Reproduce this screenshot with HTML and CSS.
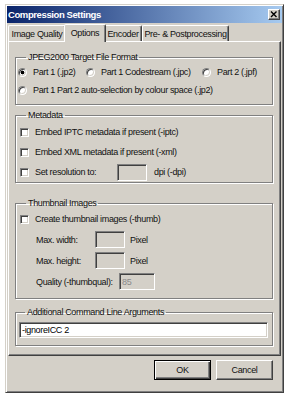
FILE: index.html
```html
<!DOCTYPE html>
<html lang="en">
<head>
  <meta charset="UTF-8" />
  <title>Compression Settings</title>
  <link rel="stylesheet" href="styles.css">
</head>
<body>

  <div class="dialog" role="dialog" aria-label="Compression Settings">
    <div class="titlebar">
      <span class="title">Compression Settings</span>
      <span class="close-btn" aria-label="Close">
        <svg width="10" height="9" viewBox="0 0 10 9">
          <path d="M2 1.5 L7.5 7 M7.5 1.5 L2 7" stroke="#000" stroke-width="1.4" fill="none" />
        </svg>
      </span>
    </div>

    <div class="tabs">
      <div class="tab tab-quality">Image Quality</div>
      <div class="tab tab-options active">Options</div>
      <div class="tab tab-encoder">Encoder</div>
      <div class="tab tab-pre">Pre- &amp; Postprocessing</div>
    </div>

    <div class="panel">
      <!-- Target format -->
      <fieldset class="group group-format">
        <legend>JPEG2000 Target File Format</legend>
        <div class="radio-row">
          <label class="opt opt-jp2"><input type="radio" name="fmt" checked /> Part 1 (.jp2)</label>
          <label class="opt opt-jpc"><input type="radio" name="fmt" /> Part 1 Codestream (.jpc)</label>
          <label class="opt"><input type="radio" name="fmt" /> Part 2 (.jpf)</label>
        </div>
        <div class="radio-row">
          <label class="opt"><input type="radio" name="fmt" /> Part 1 Part 2 auto-selection by colour space (.jp2)</label>
        </div>
      </fieldset>

      <!-- Metadata -->
      <fieldset class="group group-meta">
        <legend>Metadata</legend>
        <div class="check-row">
          <label class="opt"><input type="checkbox" /> Embed IPTC metadata if present (-iptc)</label>
        </div>
        <div class="check-row">
          <label class="opt"><input type="checkbox" /> Embed XML metadata if present (-xml)</label>
        </div>
        <div class="check-row">
          <label class="opt res-label"><input type="checkbox" /> Set resolution to:</label>
          <input type="text" class="field field-small" disabled />
          <span class="unit">dpi (-dpi)</span>
        </div>
      </fieldset>

      <!-- Thumbnails -->
      <fieldset class="group group-thumb">
        <legend>Thumbnail Images</legend>
        <div class="check-row">
          <label class="opt"><input type="checkbox" /> Create thumbnail images (-thumb)</label>
        </div>
        <div class="field-row">
          <span class="field-label">Max. width:</span>
          <input type="text" class="field field-small" disabled />
          <span class="unit">Pixel</span>
        </div>
        <div class="field-row">
          <span class="field-label">Max. height:</span>
          <input type="text" class="field field-small" disabled />
          <span class="unit">Pixel</span>
        </div>
        <div class="field-row">
          <span class="field-label label-quality">Quality (-thumbqual):</span>
          <input type="text" class="field field-quality" value="85" disabled />
        </div>
      </fieldset>

      <!-- Extra args -->
      <fieldset class="group group-args">
        <legend>Additional Command Line Arguments</legend>
        <input type="text" class="field field-args" value="-ignoreICC 2" />
      </fieldset>
    </div>

    <div class="buttons">
      <button type="button" class="btn btn-default">OK</button>
      <button type="button" class="btn">Cancel</button>
    </div>
  </div>

</body>
</html>
```

FILE: styles.css
```css
* {
  box-sizing: border-box;
}

body {
  margin: 0;
  background: #fff;
  font-family: "Liberation Sans", Arial, sans-serif;
  font-size: 9px;
  letter-spacing: -0.35px;
  line-height: 12px;
  color: #111;
}

.dialog {
  margin: 4px 0 0 5px;
  width: 279px;
  height: 389px;
  background: #d4d0c8;
  border: 1px solid;
  border-color: #d4d0c8 #404040 #404040 #d4d0c8;
  box-shadow: inset 1px 1px 0 #fff, inset -1px -1px 0 #808080;
  padding: 1px;
  display: flex;
  flex-direction: column;
}

/* Title bar */
.titlebar {
  height: 17px;
  display: flex;
  align-items: center;
  justify-content: space-between;
  padding: 0 2px 0 1px;
  background: linear-gradient(to right, #0a246a, #a6caf0);
}

.title {
  color: #fff;
  font-weight: 700;
  font-size: 9.5px;
  letter-spacing: -0.4px;
}

.close-btn {
  width: 12px;
  height: 11px;
  display: flex;
  align-items: center;
  justify-content: center;
  background: #d4d0c8;
  border: 1px solid;
  border-color: #fff #404040 #404040 #fff;
  box-shadow: inset -1px -1px 0 #808080;
}

/* Tabs */
.tabs {
  display: flex;
  align-items: flex-end;
  height: 18px;
  margin-left: 1px;
}

.tab {
  height: 16px;
  display: flex;
  align-items: center;
  justify-content: center;
  border: 1px solid;
  border-bottom: none;
  border-color: #fff #404040 transparent #fff;
  border-radius: 2px 2px 0 0;
  box-shadow: inset -1px 0 0 #808080;
  white-space: nowrap;
}

.tab-quality { width: 58px; }
.tab-options { width: 38px; }
.tab-encoder { width: 38px; }
.tab-pre { width: 87px; }

.tab.active {
  width: 42px;
  height: 18px;
  margin: 0 -2px;
  position: relative;
  top: 1px;
  z-index: 1;
  background: #d4d0c8;
  padding-bottom: 2px;
}

/* Panel */
.panel {
  height: 315px;
  margin: 0 1px 0 1px;
  border: 1px solid;
  border-color: #fff #404040 #404040 #fff;
  box-shadow: inset -1px -1px 0 #808080;
  padding: 9px 7px 0 6px;
}

.group {
  margin: 0;
  padding: 0 4px;
  min-width: 0;
  border: 1px solid #808080;
  box-shadow: inset 1px 1px 0 #fff, 1px 1px 0 #fff;
}

.group legend {
  margin-left: 6px;
  padding: 0 2px;
  line-height: 12px;
}

.group-format { padding-bottom: 5px; }
.group-meta { margin-top: 4px; padding-top: 1px; }
.group-thumb { margin-top: 14px; padding-bottom: 6px; }
.group-args { margin-top: 7px; padding: 4px 4px 7px 3px; }

.radio-row {
  display: flex;
  align-items: center;
  height: 18px;
  margin-left: -2px;
}

.check-row {
  display: flex;
  align-items: center;
  height: 20px;
}

.field-row {
  display: flex;
  align-items: center;
  height: 21px;
  padding-left: 16px;
  white-space: nowrap;
}

.opt {
  display: flex;
  align-items: center;
  gap: 6px;
  white-space: nowrap;
}

.opt-jp2 { width: 68px; }
.opt-jpc { width: 116px; }
.res-label { width: 97px; }

.opt input {
  appearance: none;
  margin: 0;
  width: 9px;
  height: 9px;
  flex: none;
  background: #fff;
  border: 1px solid;
  border-color: #808080 #fff #fff #808080;
  box-shadow: inset 1px 1px 0 #404040, inset -1px -1px 0 #d4d0c8;
}

.opt input[type="radio"] {
  border-radius: 50%;
}

.opt input[type="radio"]:checked {
  background: radial-gradient(circle, #000 1.6px, #fff 2.2px);
}

.field {
  appearance: none;
  margin: 0;
  height: 17px;
  padding: 0 2px;
  font: inherit;
  letter-spacing: inherit;
  background: #d4d0c8;
  border: 1px solid;
  border-color: #808080 #fff #fff #808080;
  box-shadow: inset 1px 1px 0 #404040, inset -1px -1px 0 #d4d0c8;
  outline: none;
}

.field:disabled {
  color: #8a8a8a;
}

.field-small { width: 30px; flex: none; }

.field-label { width: 59px; flex: none; }
.label-quality { width: 83px; }

.field-quality { width: 36px; flex: none; }

.field-args {
  width: 100%;
  height: 16px;
  background: #fff;
  color: #000;
}

.unit {
  margin-left: 5px;
}

.check-row .unit {
  margin-left: 7px;
}

/* Buttons */
.buttons {
  display: flex;
  justify-content: flex-end;
  gap: 5px;
  margin-top: 4px;
  padding-right: 9px;
}

.btn {
  appearance: none;
  width: 57px;
  height: 20px;
  padding: 0;
  font: inherit;
  letter-spacing: inherit;
  color: #111;
  background: #d4d0c8;
  border: 1px solid;
  border-color: #fff #404040 #404040 #fff;
  box-shadow: inset -1px -1px 0 #808080;
}

.btn-default {
  border-color: #000;
  box-shadow: inset 1px 1px 0 #fff, inset -1px -1px 0 #404040, inset -2px -2px 0 #808080;
}
```
